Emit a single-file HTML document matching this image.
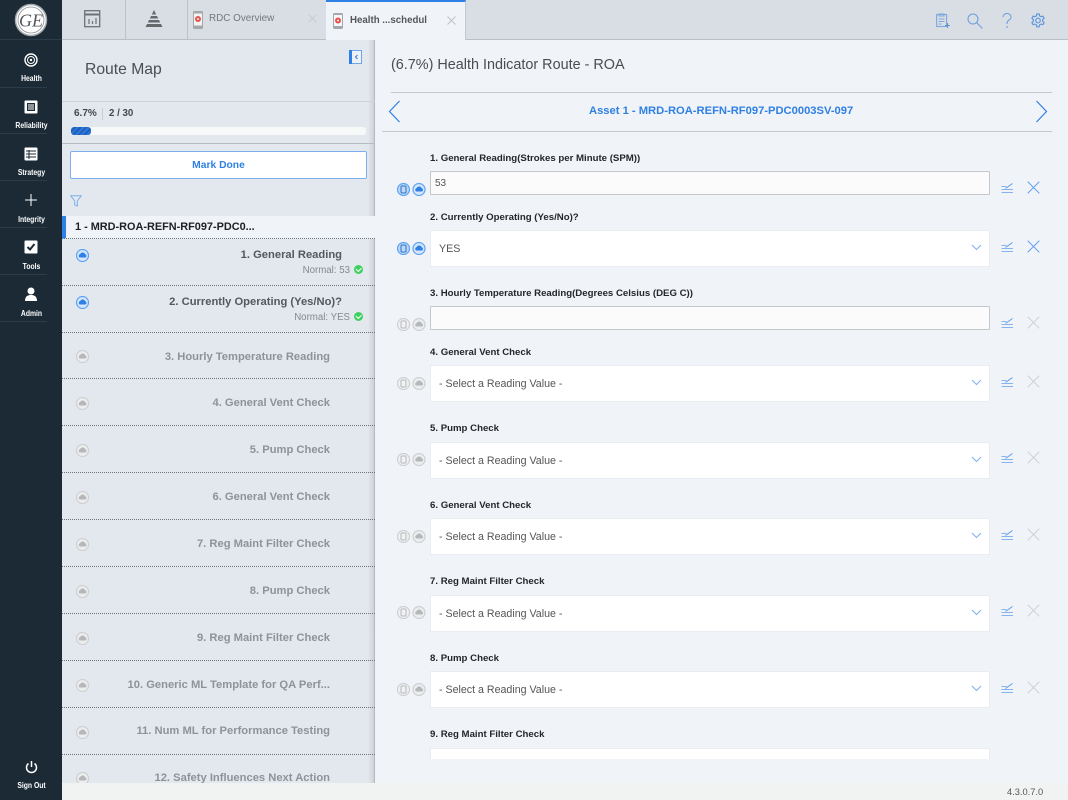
<!DOCTYPE html>
<html><head><meta charset="utf-8"><style>
*{box-sizing:border-box}
html,body{margin:0;padding:0}
body{width:1068px;height:800px;overflow:hidden;position:relative;background:#f1f3f4;font-family:"Liberation Sans",sans-serif;color:#2c2f33}
.a{position:absolute}
.t{position:absolute;white-space:nowrap}
.nav{position:absolute;left:8px;width:47px;text-align:center;color:#fff;font-size:8px;font-weight:bold;transform:scaleX(.85);white-space:nowrap}
.navline{position:absolute;left:0;width:47px;height:1px;background:#2c3d49}
.it{position:absolute;left:62px;width:313px;height:47px;border-bottom:1px dotted #6e7378}
.it b{position:absolute;right:45px;top:11px;font-size:11.2px;color:#8f9397;white-space:nowrap}
.it.on b{right:33px;top:10px;color:#55585c}
.it span{position:absolute;right:25px;top:26px;font-size:9.7px;color:#85898d;white-space:nowrap}
.it i{position:absolute;right:12px;top:26px;width:9px;height:9px;border-radius:50%;background:#3fd05f}
.it i:after{content:"";position:absolute;left:2px;top:1.500px;width:4px;height:2.500px;border-left:1px solid #fff;border-bottom:1px solid #fff;transform:rotate(-45deg)}
.it svg{position:absolute;left:14px;top:10px}
.lb{position:absolute;left:430px;font-size:9.65px;font-weight:bold;color:#24272a;white-space:nowrap}
.in{position:absolute;left:430px;width:560px;height:24px;background:#fbfbfb;border:1px solid #c5c8ca;border-radius:1px;font-size:10px;color:#555;padding:6px 4px}
.sel{position:absolute;left:430px;width:560px;height:37px;background:#fff;border:1px solid #e9ecf0;font-size:10.65px;color:#555;padding:12px 8px}
.sel svg{position:absolute;right:7px;top:13px}
.r{position:absolute}
</style></head><body>
<svg width="0" height="0" style="position:absolute"><defs>
<g id="cb"><circle cx="6.5" cy="6.5" r="6" fill="#d5e6fb" stroke="#5ba2f5" stroke-width="1.2"/><path d="M3.500 8.500a2 2 0 0 1 .7-3.500 2.700 2.700 0 0 1 5 .3 1.700 1.700 0 0 1 .3 3.200z" fill="#2f80e4"/></g>
<g id="cg"><circle cx="6.5" cy="6.5" r="6" fill="#ecedee" stroke="#cdcfd1" stroke-width="1.2"/><path d="M3.500 8.500a2 2 0 0 1 .7-3.500 2.700 2.700 0 0 1 5 .3 1.700 1.700 0 0 1 .3 3.200z" fill="#b5b8bb"/></g>
<g id="db"><circle cx="6.5" cy="6.5" r="6" fill="#bcd9fa" stroke="#5ba2f5" stroke-width="1.2"/><rect x="4" y="3" width="5" height="7" rx="1" fill="none" stroke="#2f6fbe" stroke-width="1"/></g>
<g id="dg"><circle cx="6.5" cy="6.5" r="6" fill="#f0f1f2" stroke="#cdcfd1" stroke-width="1.2"/><rect x="4" y="3" width="5" height="7" rx="1" fill="none" stroke="#b5b8bb" stroke-width="1"/></g>
<g id="tune" fill="none" stroke="#85b3ee" stroke-width="1"><path d="M.5 5.500h5M.5 8.500h11.500M.5 11.500h11.500"/><path d="M4.500 7.500 11.500 2.500" stroke="#5e9bea"/></g>
<g id="xb" fill="none" stroke="#5a9bee" stroke-width="1"><path d="M.7.700 12.300 12.300M12.300.700.700 12.300"/></g>
<g id="xg" fill="none" stroke="#cdd0d3" stroke-width="1"><path d="M.7.700 12.300 12.300M12.300.700.700 12.300"/></g>
<g id="chev" fill="none" stroke="#7db0ef" stroke-width="1"><path d="M1 1 5.500 5.500 10 1"/></g>
</defs></svg>

<!-- right content bg -->
<div class="a" style="left:375px;top:40px;width:693px;height:743px;background:#f0f3f7"></div>
<!-- bottom -->
<div class="a" style="left:62px;top:783px;width:1006px;height:17px;background:#f1f2f2"></div>
<div class="t" style="left:1007px;top:787px;font-size:9.3px;color:#55585b">4.3.0.7.0</div>

<!-- top bar -->
<div class="a" style="left:62px;top:0;width:1006px;height:40px;background:#d8dee4;border-bottom:1px solid #b9bfc4"></div>
<div class="a" style="left:125px;top:0;width:1px;height:40px;background:#bcc2c7"></div>
<div class="a" style="left:187px;top:0;width:1px;height:40px;background:#bcc2c7"></div>
<div class="a" style="left:326px;top:0;width:140px;height:40px;background:#f0f3f7;border-top:2px solid #2f80e4;border-right:1px solid #c5cacf"></div>
<svg class="a" style="left:84px;top:10px" width="17" height="18" fill="none" stroke="#6f7275"><rect x=".7" y=".7" width="15" height="16" stroke-width="1.300"/><path d="M1 4.500h15" stroke-width="2"/><path d="M5 14V9M8.500 14v-3M12 14V8" stroke-width="1.200"/></svg>
<svg class="a" style="left:145px;top:10px" width="18" height="18" fill="#66696c"><path d="M9 0 11.200 4.500H6.800z"/><path d="M6 6h6l1.200 2.500H4.800zM4 10h10l1.200 2.500H2.800zM2 14h14l1.500 3H.5z"/></svg>
<svg class="a" style="left:193px;top:11px" width="10" height="18"><rect width="10" height="18" rx="1.500" fill="#a5a8ab"/><rect x="1" y="2.500" width="8" height="12" fill="#f3f3f3"/><circle cx="5" cy="8" r="3" fill="#e4534e"/><circle cx="5" cy="8" r="1" fill="#f3f3f3"/></svg>
<div class="t" style="left:209px;top:13px;font-size:9.9px;color:#75787b">RDC Overview</div>
<svg class="a" style="left:308px;top:14px" width="10" height="10" fill="none" stroke="#c8ccd0"><path d="M.5.500l8 8M8.500.500l-8 8"/></svg>
<svg class="a" style="left:333px;top:13px" width="10" height="16"><rect width="10" height="16" rx="1.500" fill="#a5a8ab"/><rect x="1" y="2" width="8" height="11" fill="#f7f7f7"/><circle cx="5" cy="7.500" r="3" fill="#e4534e"/><circle cx="5" cy="7.500" r="1" fill="#f7f7f7"/></svg>
<div class="t" style="left:350px;top:15px;font-size:9.7px;font-weight:bold;color:#54575a">Health ...schedul</div>
<svg class="a" style="left:447px;top:16px" width="10" height="10" fill="none" stroke="#c0c4c8"><path d="M.5.500l8 8M8.500.500l-8 8"/></svg>
<svg class="a" style="left:936px;top:13px" width="15" height="15" fill="none" stroke="#7fa8dc" stroke-width="1.100"><rect x=".6" y="1.500" width="10" height="12"/><path d="M3 1h5v2H3zM2.500 6h6M2.500 8.500h6M2.500 11h3"/><path d="M9 12.500h5M11.500 10v5" stroke="#5f93d6"/></svg>
<svg class="a" style="left:967px;top:13px" width="16" height="16" fill="none" stroke="#6fa0e0" stroke-width="1.100"><circle cx="6" cy="6" r="5"/><path d="M9.500 9.500 15.500 15.500"/></svg>
<svg class="a" style="left:1002px;top:13px" width="10" height="16" fill="none" stroke="#6fa0e0" stroke-width="1.100"><path d="M1 4a4 3.500 0 1 1 6 3c-1.500 1-2 1.800-2 4"/><path d="M5 13v2"/></svg>
<svg class="a" style="left:1031px;top:13px" width="14" height="15" viewBox="0 0 14 15" fill="none" stroke="#5f97df" stroke-width="1.200"><circle cx="7" cy="7.500" r="2.300"/><path d="M5.800 1h2.400l.4 1.900 1.500.8 1.800-.6 1.200 2.100-1.400 1.300v1.800l1.400 1.300-1.200 2.100-1.800-.6-1.500.8-.4 1.900H5.800l-.4-1.900-1.500-.8-1.800.6L.9 9.600l1.400-1.300V6.500L.9 5.200l1.200-2.100 1.800.6 1.500-.8z"/></svg>

<!-- left panel -->
<div class="a" style="left:62px;top:40px;width:313px;height:743px;background:linear-gradient(90deg,#e3e7ee 0,#e3e7ee 306px,#cfd3d8 312px,#b5b9bd 312px,#b5b9bd 313px)"></div>
<div class="t" style="left:85px;top:61px;font-size:15.7px;color:#4b4e51">Route Map</div>
<svg class="a" style="left:349px;top:50px" width="14" height="14"><rect x=".5" y=".5" width="12" height="13" fill="#eef2f8" stroke="#6ea5ea"/><rect x="0" y="0" width="3" height="14" fill="#2f80e4"/><path d="M8.500 5 6.500 7l2 2" fill="none" stroke="#3a78c8"/></svg>
<div class="a" style="left:62px;top:101px;width:313px;height:1px;background:#cfd3d8"></div>
<div class="t" style="left:74px;top:108px;font-size:10px;font-weight:bold;color:#45484b">6.7%</div>
<div class="a" style="left:102px;top:108px;width:1px;height:12px;background:#c8ccd0"></div>
<div class="t" style="left:109px;top:108px;font-size:9.700px;font-weight:bold;color:#45484b">2 / 30</div>
<div class="a" style="left:71px;top:127px;width:295px;height:8px;background:#f7f8f8;border-radius:3px"></div>
<div class="a" style="left:71px;top:127px;width:20px;height:8px;background:repeating-linear-gradient(135deg,#2a78dd 0 2px,#1f5fb5 2px 4px);border-radius:3px"></div>
<div class="a" style="left:62px;top:143px;width:313px;height:1px;background:#b8bcc1"></div>
<div class="a" style="left:70px;top:151px;width:297px;height:28px;background:#fff;border:1px solid #7eaef0;border-radius:2px;text-align:center;font-size:10.3px;font-weight:bold;color:#2f80e4;padding-top:8px">Mark Done</div>
<svg class="a" style="left:70px;top:195px" width="12" height="12" fill="none" stroke="#7fb0ef"><path d="M.7.700h10.600L7.300 6v5L4.700 10V6z"/></svg>
<div class="a" style="left:62px;top:216px;width:313px;height:23px;background:#f0f3f7;border-left:4px solid #2f80e4;border-bottom:1px dotted #6e7378;font-size:10.9px;font-weight:bold;color:#1e2124;padding:5px 0 0 9px;white-space:nowrap">1 - MRD-ROA-REFN-RF097-PDC0...</div>

<div class="it on" style="top:239px"><svg width="13" height="13"><use href="#cb"/></svg><b>1. General Reading</b><span>Normal: 53</span><i></i></div>
<div class="it on" style="top:286px"><svg width="13" height="13"><use href="#cb"/></svg><b>2. Currently Operating (Yes/No)?</b><span>Normal: YES</span><i></i></div>
<div class="it" style="top:333px;height:46px"><svg width="13" height="13" style="top:17px"><use href="#cg"/></svg><b style="top:18px">3. Hourly Temperature Reading</b></div>
<div class="it" style="top:379px"><svg width="13" height="13" style="top:18px"><use href="#cg"/></svg><b style="top:18px">4. General Vent Check</b></div>
<div class="it" style="top:426px"><svg width="13" height="13" style="top:18px"><use href="#cg"/></svg><b style="top:18px">5. Pump Check</b></div>
<div class="it" style="top:473px"><svg width="13" height="13" style="top:18px"><use href="#cg"/></svg><b style="top:18px">6. General Vent Check</b></div>
<div class="it" style="top:520px"><svg width="13" height="13" style="top:18px"><use href="#cg"/></svg><b style="top:18px">7. Reg Maint Filter Check</b></div>
<div class="it" style="top:567px"><svg width="13" height="13" style="top:18px"><use href="#cg"/></svg><b style="top:18px">8. Pump Check</b></div>
<div class="it" style="top:614px"><svg width="13" height="13" style="top:18px"><use href="#cg"/></svg><b style="top:18px">9. Reg Maint Filter Check</b></div>
<div class="it" style="top:661px"><svg width="13" height="13" style="top:18px"><use href="#cg"/></svg><b style="top:18px">10. Generic ML Template for QA Perf...</b></div>
<div class="it" style="top:708px"><svg width="13" height="13" style="top:18px"><use href="#cg"/></svg><b style="top:17px">11. Num ML for Performance Testing</b></div>
<div class="a" style="left:62px;top:755px;width:313px;height:28px;overflow:hidden"><svg class="a" style="left:14px;top:17px" width="13" height="13"><use href="#cg"/></svg><b class="t" style="right:45px;top:17px;font-size:11.200px;color:#8f9397">12. Safety Influences Next Action</b></div>

<!-- right header -->
<div class="t" style="left:391px;top:57px;font-size:14.4px;line-height:17px;color:#4a4d50">(6.7%) Health Indicator Route - ROA</div>
<div class="a" style="left:391px;top:92px;width:661px;height:1px;background:#c5c9cc"></div>
<div class="a" style="left:382px;top:131px;width:670px;height:1px;background:#c5c9cc"></div>
<svg class="a" style="left:388px;top:100px" width="13" height="23" fill="none" stroke="#2f80e4" stroke-width="1.200"><path d="M11.500 1 1.500 11.500 11.500 22"/></svg>
<svg class="a" style="left:1035px;top:100px" width="13" height="23" fill="none" stroke="#2f80e4" stroke-width="1.200"><path d="M1.500 1 11.500 11.500 1.500 22"/></svg>
<div class="t" style="left:589px;top:105px;font-size:11.2px;font-weight:bold;color:#2f80e4">Asset 1 - MRD-ROA-REFN-RF097-PDC0003SV-097</div>

<!-- fields -->
<div class="lb" style="top:153px">1. General Reading(Strokes per Minute (SPM))</div>
<div class="in" style="top:171px">53</div>
<div class="lb" style="top:212px">2. Currently Operating (Yes/No)?</div>
<div class="sel" style="top:230px">YES<svg width="11" height="8"><use href="#chev"/></svg></div>
<div class="lb" style="top:288px">3. Hourly Temperature Reading(Degrees Celsius (DEG C))</div>
<div class="in" style="top:306px"></div>
<div class="lb" style="top:347px">4. General Vent Check</div>
<div class="sel" style="top:365px">- Select a Reading Value -<svg width="11" height="8"><use href="#chev"/></svg></div>
<div class="lb" style="top:423px">5. Pump Check</div>
<div class="sel" style="top:442px">- Select a Reading Value -<svg width="11" height="8"><use href="#chev"/></svg></div>
<div class="lb" style="top:500px">6. General Vent Check</div>
<div class="sel" style="top:518px">- Select a Reading Value -<svg width="11" height="8"><use href="#chev"/></svg></div>
<div class="lb" style="top:576px">7. Reg Maint Filter Check</div>
<div class="sel" style="top:595px">- Select a Reading Value -<svg width="11" height="8"><use href="#chev"/></svg></div>
<div class="lb" style="top:653px">8. Pump Check</div>
<div class="sel" style="top:671px">- Select a Reading Value -<svg width="11" height="8"><use href="#chev"/></svg></div>
<div class="lb" style="top:729px">9. Reg Maint Filter Check</div>
<div class="a" style="left:430px;top:748px;width:560px;height:11px;background:#fff;border:1px solid #e9ecf0;border-bottom:0"></div>

<!-- row icons -->
<svg class="r" style="left:397px;top:183px" width="31" height="13"><use href="#db"/><use href="#cb" x="15.500"/></svg>
<svg class="r" style="left:397px;top:242px" width="31" height="13"><use href="#db"/><use href="#cb" x="15.500"/></svg>
<svg class="r" style="left:397px;top:318px" width="31" height="13"><use href="#dg"/><use href="#cg" x="15.500"/></svg>
<svg class="r" style="left:397px;top:377px" width="31" height="13"><use href="#dg"/><use href="#cg" x="15.500"/></svg>
<svg class="r" style="left:397px;top:453px" width="31" height="13"><use href="#dg"/><use href="#cg" x="15.500"/></svg>
<svg class="r" style="left:397px;top:530px" width="31" height="13"><use href="#dg"/><use href="#cg" x="15.500"/></svg>
<svg class="r" style="left:397px;top:606px" width="31" height="13"><use href="#dg"/><use href="#cg" x="15.500"/></svg>
<svg class="r" style="left:397px;top:683px" width="31" height="13"><use href="#dg"/><use href="#cg" x="15.500"/></svg>

<svg class="r" style="left:1001px;top:181px" width="45" height="13"><use href="#tune"/><use href="#xb" x="26"/></svg>
<svg class="r" style="left:1001px;top:240px" width="45" height="13"><use href="#tune"/><use href="#xb" x="26"/></svg>
<svg class="r" style="left:1001px;top:316px" width="45" height="13"><use href="#tune"/><use href="#xg" x="26"/></svg>
<svg class="r" style="left:1001px;top:375px" width="45" height="13"><use href="#tune"/><use href="#xg" x="26"/></svg>
<svg class="r" style="left:1001px;top:451px" width="45" height="13"><use href="#tune"/><use href="#xg" x="26"/></svg>
<svg class="r" style="left:1001px;top:528px" width="45" height="13"><use href="#tune"/><use href="#xg" x="26"/></svg>
<svg class="r" style="left:1001px;top:604px" width="45" height="13"><use href="#tune"/><use href="#xg" x="26"/></svg>
<svg class="r" style="left:1001px;top:681px" width="45" height="13"><use href="#tune"/><use href="#xg" x="26"/></svg>

<!-- sidebar -->
<div class="a" style="left:0;top:0;width:62px;height:800px;background:#1b2a35"></div>
<svg class="a" style="left:14px;top:3px" width="34" height="34"><circle cx="17" cy="17" r="15.500" fill="#fff" stroke="#a5aaae" stroke-width="1.500"/><circle cx="17" cy="17" r="13" fill="none" stroke="#8b9094" stroke-width=".8"/><text x="17" y="23.500" font-family="Liberation Serif" font-style="italic" font-size="18" fill="#55595d" text-anchor="middle">GE</text></svg>
<div class="navline" style="left:0;top:39px;width:62px"></div>

<svg class="a" style="left:24px;top:53px" width="14" height="14" fill="none" stroke="#fff"><circle cx="7" cy="7" r="6" stroke-width="1.400"/><circle cx="7" cy="7" r="3.500" stroke-width="1"/><circle cx="7" cy="7" r="1.200" fill="#fff" stroke="none"/></svg>
<div class="nav" style="top:74px">Health</div><div class="navline" style="top:87px"></div>
<svg class="a" style="left:24px;top:100px" width="14" height="14" fill="none"><rect x=".5" y=".5" width="13" height="13" fill="#fff" rx="1"/><rect x="3" y="3" width="8" height="8" fill="#1b2a35"/><path d="M4 5h6M4 7h6M4 9h6" stroke="#fff"/></svg>
<div class="nav" style="top:121px">Reliability</div><div class="navline" style="top:133px"></div>
<svg class="a" style="left:24px;top:147px" width="14" height="14" fill="none"><rect x=".5" y=".5" width="13" height="13" fill="#fff" rx="1"/><path d="M2 4h10M2 7h10M2 10h10M5 3v9" stroke="#1b2a35"/></svg>
<div class="nav" style="top:168px">Strategy</div><div class="navline" style="top:180px"></div>
<svg class="a" style="left:24px;top:193px" width="14" height="14" stroke="#fff"><path d="M7 1v12M1 7h12"/></svg>
<div class="nav" style="top:215px">Integrity</div><div class="navline" style="top:227px"></div>
<svg class="a" style="left:24px;top:240px" width="14" height="14" fill="none"><rect x=".5" y=".5" width="13" height="13" fill="#fff" rx="1"/><path d="M3.500 7 6 9.500 10.500 4" stroke="#1b2a35" stroke-width="2"/></svg>
<div class="nav" style="top:262px">Tools</div><div class="navline" style="top:274px"></div>
<svg class="a" style="left:24px;top:287px" width="14" height="14" fill="#fff"><circle cx="7" cy="4" r="3.500"/><path d="M1 14c0-5 3-6 6-6s6 1 6 6z"/></svg>
<div class="nav" style="top:309px">Admin</div><div class="navline" style="top:321px"></div>
<svg class="a" style="left:25px;top:760px" width="13" height="14" fill="none" stroke="#fff" stroke-width="1.500"><path d="M6.500 1v6"/><path d="M3.500 3.500a5 5 0 1 0 6 0"/></svg>
<div class="nav" style="top:781px">Sign Out</div>
</body></html>
